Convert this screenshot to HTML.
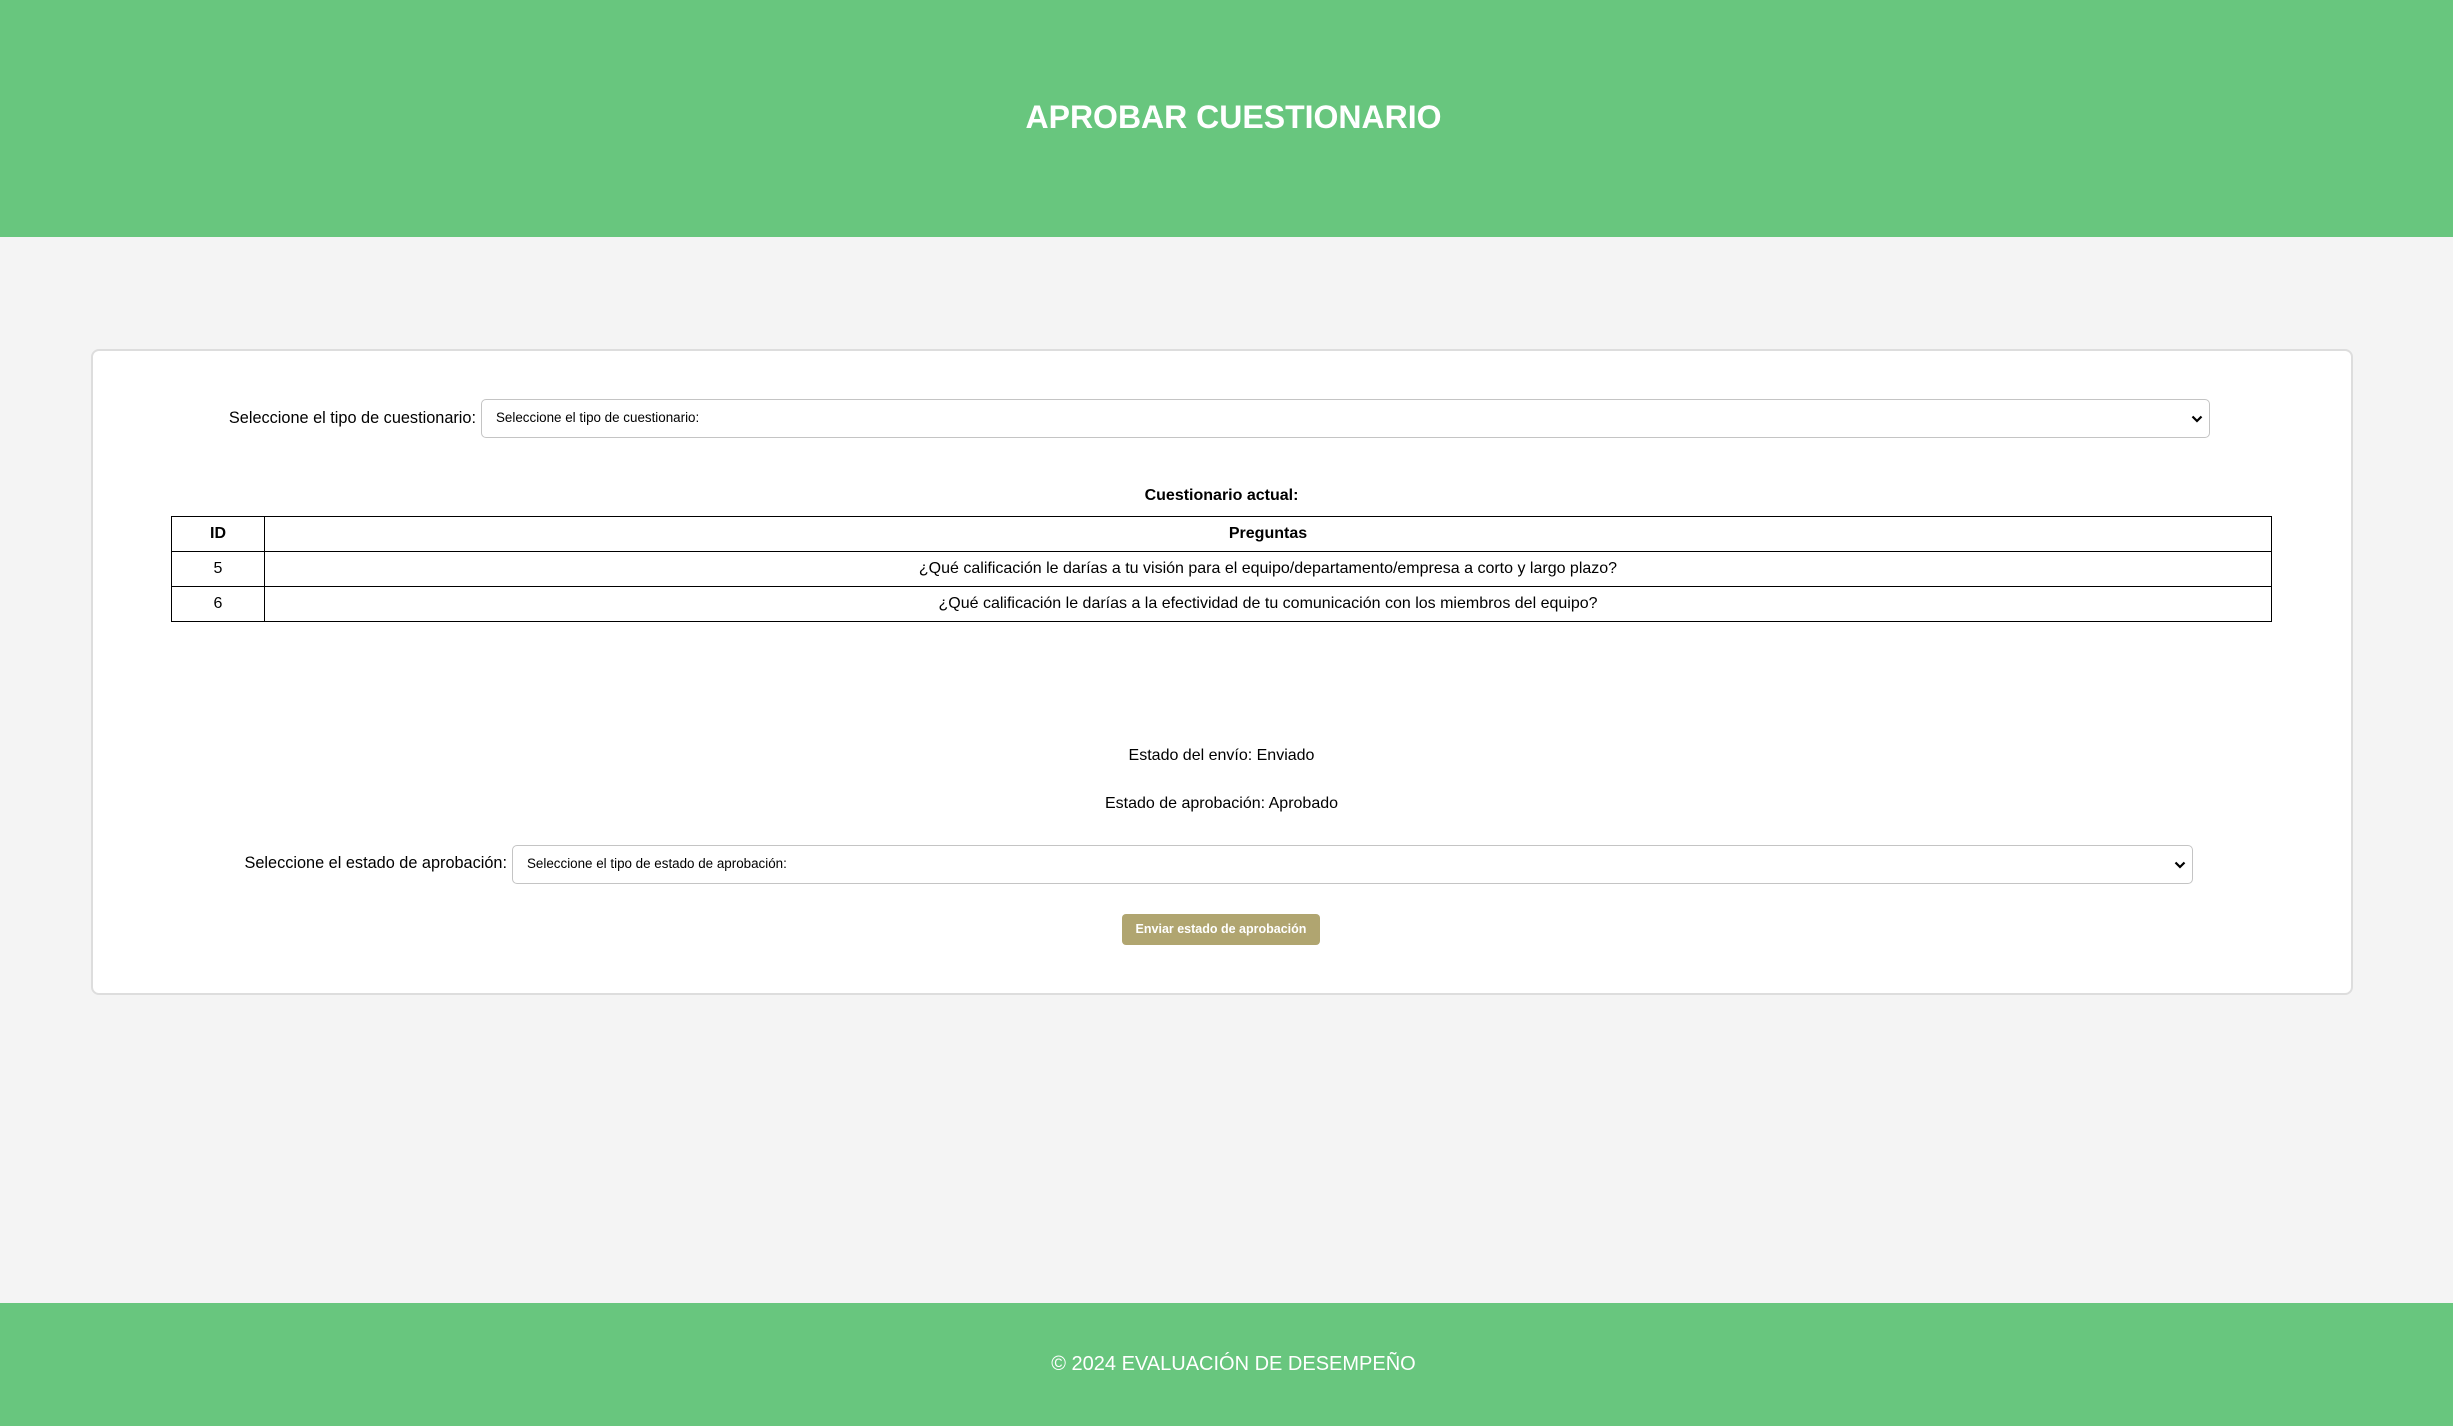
<!DOCTYPE html>
<html><head><meta charset="utf-8"><style>
*{box-sizing:border-box;margin:0;padding:0}
body{width:2453px;height:1426px;background:#f4f4f4;font-family:"Liberation Sans",Arial,sans-serif;position:relative;overflow:hidden;color:#000}
.hdr{position:absolute;left:7px;top:0;width:2453px;height:237px;color:#fff;font-weight:bold;font-size:32px;text-align:center;line-height:234px}
.hbg{position:absolute;left:0;top:0;width:2453px;height:237px;background:#68c67e}
.card{position:absolute;left:91px;top:349px;width:2262px;height:646px;background:#fff;border:2px solid #ddd;border-radius:8px}
.lbl{position:absolute;font-size:16.3px;line-height:20px;text-align:right}
.sel{position:absolute;height:39px;border:1.5px solid #c4c4c4;border-radius:5px;background:#fff;font-size:13.4px;line-height:36px;padding-left:14px}
.sel svg{position:absolute;right:6px;top:15px}
table{position:absolute;left:171px;top:516px;width:2101px;border-collapse:collapse;font-size:16px}
td,th{border:1.5px solid #000;height:35px;text-align:center;padding:0}
th{font-weight:bold}
.c{position:absolute;left:171px;width:2101px;text-align:center;font-size:16px}
.btn{position:absolute;left:1122px;top:914px;width:198px;height:31px;background:#b0a570;border-radius:4px;color:#fff;font-size:12.5px;font-weight:bold;text-align:center;line-height:31px}
.ftr{position:absolute;left:0;top:1303px;width:2453px;height:123px;background:#68c67e}
.ftt{position:absolute;left:7px;top:1303px;width:2453px;height:123px;color:#fff;font-size:20px;text-align:center;line-height:123px}
</style></head><body>
<div class="hbg"></div>
<div class="hdr">APROBAR CUESTIONARIO</div>
<div class="card"></div>
<div class="lbl" style="left:100px;width:376px;top:408px">Seleccione el tipo de cuestionario:</div>
<div class="sel" style="left:481px;top:399px;width:1729px">Seleccione el tipo de cuestionario:<svg width="12" height="8" viewBox="0 0 12 8"><path d="M1.5 1.5L6 6l4.5-4.5" stroke="#000" stroke-width="2.2" fill="none"/></svg></div>
<div class="c" style="top:487px;font-weight:bold">Cuestionario actual:</div>
<table>
<tr><th style="width:93px">ID</th><th>Preguntas</th></tr>
<tr><td>5</td><td>¿Qué calificación le darías a tu visión para el equipo/departamento/empresa a corto y largo plazo?</td></tr>
<tr><td>6</td><td>¿Qué calificación le darías a la efectividad de tu comunicación con los miembros del equipo?</td></tr>
</table>
<div class="c" style="top:747px">Estado del envío: Enviado</div>
<div class="c" style="top:795px">Estado de aprobación: Aprobado</div>
<div class="lbl" style="left:100px;width:407px;top:853px">Seleccione el estado de aprobación:</div>
<div class="sel" style="left:512px;top:845px;width:1681px">Seleccione el tipo de estado de aprobación:<svg width="12" height="8" viewBox="0 0 12 8"><path d="M1.5 1.5L6 6l4.5-4.5" stroke="#000" stroke-width="2.2" fill="none"/></svg></div>
<div class="btn">Enviar estado de aprobación</div>
<div class="ftr"></div>
<div class="ftt">© 2024 EVALUACIÓN DE DESEMPEÑO</div>
</body></html>
